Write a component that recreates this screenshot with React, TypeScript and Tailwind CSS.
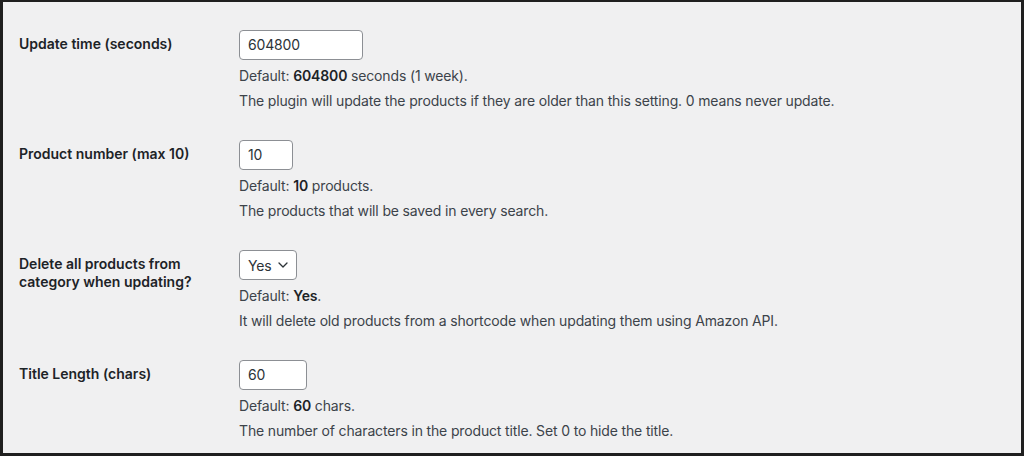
import React from "react";

const font = { fontFamily: 'Inter, "Liberation Sans", Arial, sans-serif' };

function Row({
  label,
  control,
  def,
  desc,
}: {
  label: React.ReactNode;
  control: React.ReactNode;
  def: React.ReactNode;
  desc: string;
}) {
  return (
    <div className="flex h-[110px] pt-[15px]">
      <div className="w-[236px] shrink-0 pl-[16px] pr-[10px] pt-[5px] text-[14px] leading-[18px] font-semibold text-[#1d2327]">
        {label}
      </div>
      <div className="flex flex-col items-start tracking-[-0.15px]">
        {control}
        <p className="mt-[6px] text-[14px] leading-[20px] text-[#3c434a]">{def}</p>
        <p className="mt-[5px] text-[14px] leading-[20px] text-[#3c434a]">{desc}</p>
      </div>
    </div>
  );
}

function Input({ value, w }: { value: string; w: string }) {
  return (
    <div
      className={`${w} h-[30px] rounded-[4px] border border-[#8c8f94] bg-white px-[8px] text-[14px] leading-[28px] text-[#2c3338]`}
    >
      {value}
    </div>
  );
}

export default function App() {
  return (
    <div
      style={font}
      className="w-[1024px] h-[456px] overflow-hidden border-t-2 border-x-[3px] border-b-[3px] border-[#1f1f1f] bg-[#f0f0f1] pt-[13px]"
    >
      <Row
        label="Update time (seconds)"
        control={<Input value="604800" w="w-[124px]" />}
        def={
          <>
            Default: <b className="font-semibold text-[#1d2327]">604800</b> seconds (1 week).
          </>
        }
        desc="The plugin will update the products if they are older than this setting. 0 means never update."
      />
      <Row
        label="Product number (max 10)"
        control={<Input value="10" w="w-[54px]" />}
        def={
          <>
            Default: <b className="font-semibold text-[#1d2327]">10</b> products.
          </>
        }
        desc="The products that will be saved in every search."
      />
      <Row
        label={
          <>
            Delete all products from
            <br />
            category when updating?
          </>
        }
        control={
          <div className="flex h-[30px] w-[58px] items-center rounded-[4px] border border-[#8c8f94] bg-white pl-[8px] text-[14px] text-[#2c3338]">
            <span>Yes</span>
            <svg className="ml-[6px]" width="10" height="6" viewBox="0 0 10 6" fill="none">
              <path d="M1 1l4 4 4-4" stroke="#2c3338" strokeWidth="1.3" strokeLinecap="round" strokeLinejoin="round" />
            </svg>
          </div>
        }
        def={
          <>
            Default: <b className="font-semibold text-[#1d2327]">Yes</b>.
          </>
        }
        desc="It will delete old products from a shortcode when updating them using Amazon API."
      />
      <Row
        label="Title Length (chars)"
        control={<Input value="60" w="w-[68px]" />}
        def={
          <>
            Default: <b className="font-semibold text-[#1d2327]">60</b> chars.
          </>
        }
        desc="The number of characters in the product title. Set 0 to hide the title."
      />
    </div>
  );
}
